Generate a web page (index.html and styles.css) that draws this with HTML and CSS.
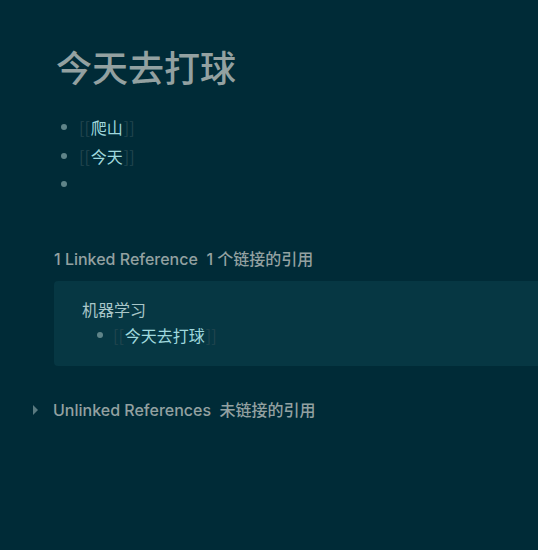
FILE: index.html
```html
<!DOCTYPE html>
<html lang="zh">
<head>
<meta charset="utf-8">
<title>今天去打球</title>
<link rel="stylesheet" href="styles.css">
</head>
<body>
<div class="page">
  <h1 class="title">今天去打球</h1>
  <ul class="blocks">
    <li><span class="br">[[</span><a class="ref">爬山</a><span class="br">]]</span></li>
    <li><span class="br">[[</span><a class="ref">今天</a><span class="br">]]</span></li>
    <li></li>
  </ul>

  <div class="refs">
    <div class="refs-head">1 Linked Reference&nbsp; 1 个链接的引用</div>
    <div class="ref-card">
      <div class="ref-page">机器学习</div>
      <ul class="blocks small">
        <li><span class="br">[[</span><a class="ref">今天去打球</a><span class="br">]]</span></li>
      </ul>
    </div>
  </div>

  <div class="unlinked">
    <span class="caret"></span>
    <span class="refs-head">Unlinked References&nbsp; 未链接的引用</span>
  </div>
</div>
</body>
</html>
```
FILE: styles.css
```css
html, body {
    margin: 0;
    background: #002b37;
    height: 100%;
}

body {
    font-family: Inter, "Noto Sans CJK SC", sans-serif;
    color: #93a1a1;
    font-size: 16px;
}

.page {
    padding: 41px 0 0 54px;
}

.title {
    margin: 0 0 0 2px;
    font-size: 36px;
    font-weight: 500;
    line-height: 50px;
    color: #93a1a1;
    font-family: "Noto Sans CJK SC", sans-serif;
}

.blocks {
    list-style: none;
    margin: 22px 0 0 0;
    padding: 0 0 0 7px;
}

.blocks li {
    display: flex;
    align-items: center;
    height: 28.5px;
    padding-left: 18px;
    position: relative;
}

.blocks li::before {
    content: "";
    position: absolute;
    left: 0;
    top: 11px;
    width: 6px;
    height: 6px;
    border-radius: 50%;
    background: #5f8489;
}

.br {
    color: #22464f;
    font-family: "Noto Sans CJK SC", sans-serif;
}

.ref {
    color: #9fd8dd;
    font-family: "Noto Sans CJK SC", sans-serif;
    padding: 0 1px;
}

.refs {
    margin-top: 50px;
}

.refs-head {
    font-weight: 500;
    color: #93a1a1;
    line-height: 20px;
}

.ref-card {
    margin-top: 12px;
    background: #063743;
    border-radius: 4px 0 0 4px;
    height: 85px;
    padding: 17px 0 0 28px;
    box-sizing: border-box;
}

.ref-page {
    font-family: "Noto Sans CJK SC", sans-serif;
    color: #a9c6c8;
    line-height: 22px;
}

.blocks.small {
    margin-top: 2px;
    padding-left: 15px;
}

.blocks.small li {
    height: 26px;
    padding-left: 16px;
}

.blocks.small li::before {
    top: 10px;
}

.unlinked {
    margin: 34px 0 0 -21px;
    display: flex;
    align-items: center;
    gap: 15px;
}

.caret {
    width: 0;
    height: 0;
    border-top: 5px solid transparent;
    border-bottom: 5px solid transparent;
    border-left: 5px solid #5a7a80;
}
```
